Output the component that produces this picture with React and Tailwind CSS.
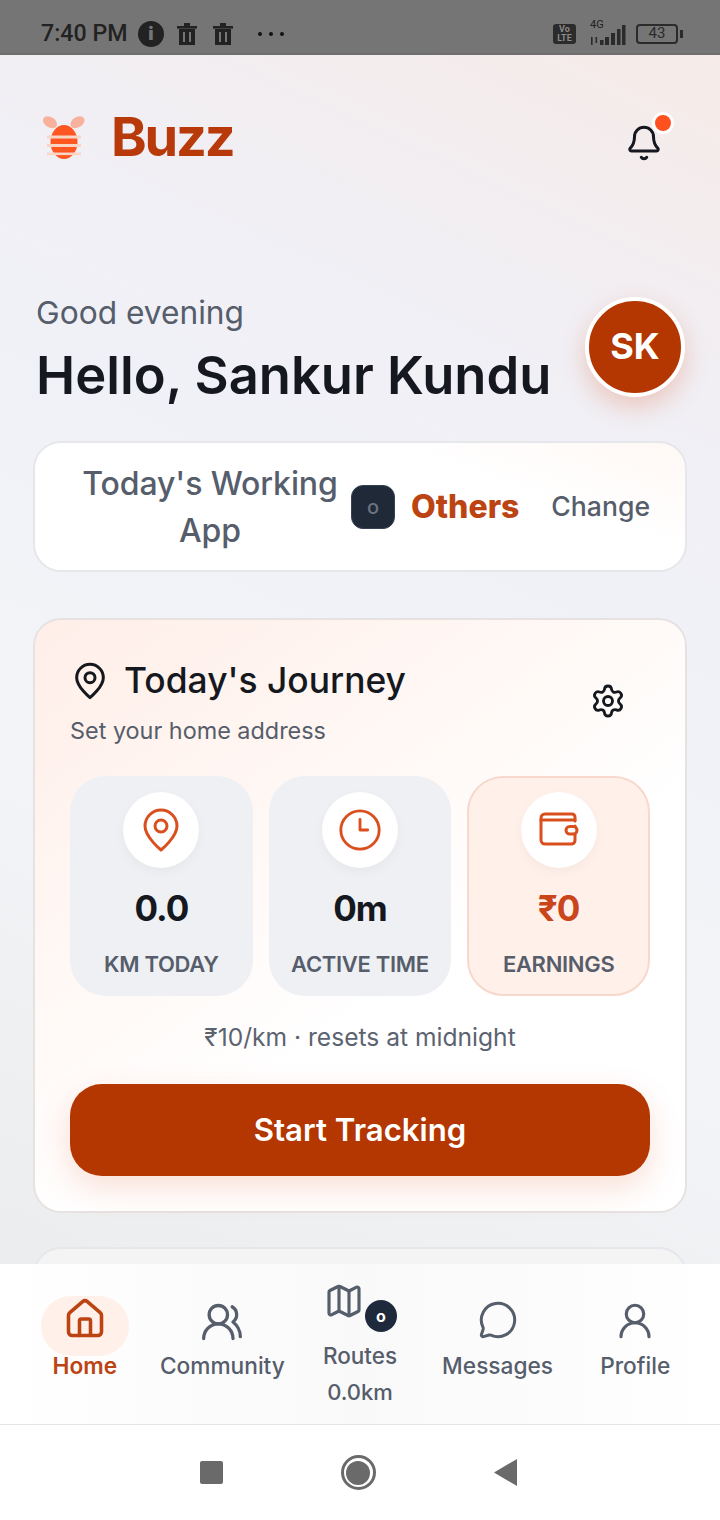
import { Bell, House, Map, MessageCircle, Settings, UserRound, UsersRound } from "lucide-react";

function BuzzLogo() {
  return (
    <svg width="46" height="46" viewBox="0 0 46 46">
      <ellipse cx="9" cy="8.2" rx="7.6" ry="5.2" transform="rotate(32 9 8.2)" fill="#f8b19c" />
      <ellipse cx="36.5" cy="8.2" rx="7.6" ry="5.2" transform="rotate(-32 36.5 8.2)" fill="#f8b19c" />
      <ellipse cx="23" cy="28" rx="13.5" ry="17" fill="#ff5722" />
      <rect x="6" y="21.5" width="34" height="3" fill="#fcd5c5" />
      <rect x="6" y="30" width="34" height="3" fill="#fcd5c5" />
      <rect x="6" y="38.5" width="34" height="2.6" fill="#fcd5c5" />
    </svg>
  );
}

function Trash() {
  return (
    <svg width="20" height="22" viewBox="0 0 20 22" fill="#222">
      <rect x="0" y="3" width="20" height="2.6" />
      <rect x="7" y="0" width="6" height="3" />
      <path d="M2 6h16v16H2z M6 9v10h2V9z M12 9v10h2V9z" fillRule="evenodd" />
    </svg>
  );
}

function StatusBar() {
  return (
    <div className="h-[55px] shrink-0 bg-[#757575] border-b-2 border-[#6e6e6e] flex items-center pl-[41px] pr-[37px] pt-[14px] text-[#222]">
      <span className="text-[23.2px] font-medium font-['Roboto',sans-serif] leading-none w-[97px]">7:40 PM</span>
      <div className="w-[26px] h-[26px] rounded-full bg-[#222] flex items-center justify-center">
        <span className="text-[#757575] text-[18px] font-black font-['Inter',sans-serif] leading-none">i</span>
      </div>
      <div className="ml-[13px]"><Trash /></div>
      <div className="ml-[16px]"><Trash /></div>
      <div className="ml-[25px] flex gap-[7px]">
        <span className="w-[4px] h-[4px] rounded-full bg-[#111]" />
        <span className="w-[4px] h-[4px] rounded-full bg-[#111]" />
        <span className="w-[4px] h-[4px] rounded-full bg-[#111]" />
      </div>
      <div className="ml-auto flex items-center">
        <div className="w-[23px] h-[20px] rounded-[3px] bg-[#2b2b2b] text-[#8a8a8a] text-[9px] font-bold leading-[9px] text-center font-['Roboto',sans-serif] pt-[1px]">
          Vo<br />LTE
        </div>
        <div className="ml-[12px] relative w-[38px] h-[22px]">
          <span className="absolute left-[2px] -top-[4px] text-[11px] leading-none text-[#222] font-['Roboto',sans-serif]">4G</span>
          <svg className="absolute left-0 bottom-0" width="38" height="20" viewBox="0 0 38 20" fill="#2b2b2b">
            <path d="M3 12v8h1.6v-8zM7.5 12v6h1.6v-6z" />
            <rect x="12" y="15" width="3.5" height="5" />
            <rect x="17" y="12" width="4" height="8" />
            <rect x="23" y="8" width="4" height="12" />
            <rect x="29" y="4" width="3.5" height="16" />
            <rect x="34" y="0" width="3.5" height="20" />
          </svg>
        </div>
        <div className="ml-[10px] w-[42px] h-[20px] rounded-[4px] border-2 border-[#2b2b2b] flex items-center justify-center text-[15px] leading-none text-[#2b2b2b] font-['Roboto',sans-serif]">
          43
        </div>
        <div className="ml-[2px] w-[3px] h-[8px] bg-[#2b2b2b]" />
      </div>
    </div>
  );
}

function PinIcon({ size, strokeWidth, className }) {
  return (
    <svg width={size} height={size} viewBox="0 0 24 24" fill="none" stroke="currentColor" strokeWidth={strokeWidth} strokeLinejoin="round" className={className}>
      <path d="M20 10c0 5.5-8 12-8 12s-8-6.5-8-12a8 8 0 0 1 16 0z" />
      <circle cx="12" cy="10" r="3" />
    </svg>
  );
}

function ClockIcon() {
  return (
    <svg width="46" height="46" viewBox="0 0 24 24" fill="none" stroke="#d9501e" strokeWidth="1.5" strokeLinecap="round" strokeLinejoin="round">
      <circle cx="12" cy="12" r="10" />
      <path d="M12 6.5V12h4" />
    </svg>
  );
}

function WalletIcon() {
  return (
    <svg width="40" height="38" viewBox="0 0 40 38" fill="none" stroke="#d9501e" strokeWidth="3" strokeLinejoin="round" strokeLinecap="round">
      <path d="M36 15V29a4 4 0 0 1-3 4H6a4 4 0 0 1-4-4V7a4 4 0 0 1 4-4h27a3 3 0 0 1 3 3v4" />
      <path d="M2 9h34" />
      <rect x="27" y="15.5" width="11" height="7.5" rx="3.7" fill="#fff" />
    </svg>
  );
}

function StatCard({ icon, value, label, highlight }) {
  return (
    <div
      className={
        highlight
          ? "h-[220px] rounded-[36px] bg-[#fff0ea] border-2 border-[#f8d8cc] flex flex-col items-center pt-[14px]"
          : "h-[220px] rounded-[36px] bg-[#eef0f4] flex flex-col items-center pt-[16px]"
      }
    >
      <div className="w-[76px] h-[76px] rounded-full bg-white shadow-[0_4px_12px_rgba(0,0,0,0.04)] flex items-center justify-center">
        {icon}
      </div>
      <div className={highlight ? "mt-[20px] text-[35px] leading-[40px] font-bold tracking-[-1px] text-[#c9451a]" : "mt-[20px] text-[35px] leading-[40px] font-bold tracking-[-1px] text-[#16181f]"}>
        {value}
      </div>
      <div className="mt-[22px] text-[22px] leading-[28px] font-semibold text-[#565d6b] tracking-[-0.3px]">{label}</div>
    </div>
  );
}

function NavItem({ icon, label, active }) {
  return (
    <div className="flex flex-col items-center pt-[32px]">
      <div className={active ? "w-[88px] h-[60px] -mb-[8px] rounded-full bg-[#fff0ea] flex items-start justify-center pt-[1px]" : "h-[60px] -mb-[8px] flex items-start justify-center pt-[4px]"}>
        {icon}
      </div>
      <span className={active ? "text-[22.7px] leading-[36px] font-semibold text-[#bc4412]" : "text-[22.7px] leading-[36px] font-medium text-[#565d6b]"}>
        {label}
      </span>
    </div>
  );
}

function BottomNav() {
  return (
    <div className="h-[161px] shrink-0 bg-gradient-to-r from-white via-[#f9f9fa] to-white border-b border-[#e4e5e7] grid grid-cols-5 px-4 font-['Inter',sans-serif]">
      <NavItem active label="Home" icon={<House size={44} strokeWidth={1.95} className="text-[#bc4412]" />} />
      <NavItem label="Community" icon={<UsersRound size={44} strokeWidth={1.8} className="text-[#565d6b]" />} />
      <div className="flex flex-col items-center pt-[17px]">
        <div className="relative -translate-x-[16px]">
          <Map size={40} strokeWidth={1.9} className="text-[#565d6b]" />
          <div className="absolute -right-[33px] top-[19px] w-[32px] h-[32px] rounded-full bg-[#1e293b] flex items-center justify-center text-white text-[16px] font-bold leading-none">
            o
          </div>
        </div>
        <span className="mt-[20px] text-[22.5px] leading-[30px] font-medium text-[#565d6b]">Routes</span>
        <span className="mt-[7px] text-[22px] leading-[28px] font-medium text-[#565d6b]">0.0km</span>
      </div>
      <NavItem label="Messages" icon={<MessageCircle size={40} strokeWidth={1.8} className="text-[#565d6b]" />} />
      <NavItem label="Profile" icon={<UserRound size={42} strokeWidth={1.8} className="text-[#565d6b]" />} />
    </div>
  );
}

function SystemNav() {
  return (
    <div className="flex-1 bg-white flex items-center justify-center gap-[118px] pr-[4px]">
      <div className="w-[23px] h-[23px] rounded-[2px] bg-[#6a6a6a]" />
      <div className="w-[35px] h-[35px] rounded-full border-[3px] border-[#6a6a6a] flex items-center justify-center">
        <div className="w-[24px] h-[24px] rounded-full bg-[#6a6a6a]" />
      </div>
      <svg width="23" height="27" viewBox="0 0 23 27"><path d="M0 13.5 23 0v27z" fill="#6a6a6a" /></svg>
    </div>
  );
}

export default function App() {
  return (
    <div className="w-[720px] h-[1520px] flex flex-col overflow-hidden font-['Inter',sans-serif]">
      <StatusBar />

      <div className="h-[1209px] shrink-0 overflow-hidden bg-[linear-gradient(205deg,#f6ebe8_0%,#f1eff4_22%,#f0f1f7_38%,#f3f4f7_65%,#ecedee_100%)]">
        <div className="flex items-center justify-between pt-[54px] pl-[41px] pr-[57px]">
          <div className="flex items-center gap-[24px]">
            <BuzzLogo />
            <span className="text-[54px] leading-[56px] font-bold text-[#b83a0a] tracking-[-2.2px]">Buzz</span>
          </div>
          <div className="relative mt-[12px]">
            <Bell size={38} strokeWidth={1.9} className="text-[#15181e]" />
            <span className="absolute -right-[11px] -top-[12px] w-[22px] h-[22px] rounded-full bg-[#ff5020] border-[3px] border-white" />
          </div>
        </div>

        <div className="mt-[130px] pl-[36px] pr-[36px] flex items-start justify-between">
          <div>
            <div className="text-[31.7px] leading-[36px] text-[#565d6b]">Good evening</div>
            <div className="mt-[13px] text-[52.5px] leading-[62px] font-semibold text-[#15181e]">Hello, Sankur Kundu</div>
          </div>
          <div className="mt-[2px] w-[100px] h-[100px] -mr-[1px] rounded-full bg-[#b43600] border-4 border-white shadow-[0_10px_24px_rgba(220,80,30,0.25)] flex items-center justify-center text-white text-[36px] font-bold pb-[3px]">
            SK
          </div>
        </div>

        <div className="mt-[35px] mx-[33px] h-[131px] rounded-[28px] bg-[linear-gradient(200deg,#fff8f5_0%,#ffffff_30%)] border-2 border-[#e6e7ea] flex items-center pl-[35px] pr-[35px]">
          <div className="w-[280px] text-center text-[32px] leading-[47px] font-[550] tracking-[-0.1px] text-[#565d6b] mr-[1px]">Today's Working App</div>
          <div className="w-[44px] h-[44px] rounded-[12px] bg-[#1f2937] border border-[#374151] flex items-center justify-center text-[#6b7280] text-[20px] font-medium">
            o
          </div>
          <span className="ml-[16px] text-[32px] font-extrabold text-[#bc4412]">Others</span>
          <span className="ml-auto text-[26.6px] font-medium text-[#565d6b]">Change</span>
        </div>

        <div className="mt-[46px] mx-[33px] h-[595px] rounded-[28px] border-2 border-[#e6e2e1] bg-[linear-gradient(145deg,#ffeee8_0%,#fff5f1_25%,#ffffff_60%)] px-[35px] pt-[38px]">
          <div className="flex justify-between">
            <div>
              <div className="flex items-center">
                <PinIcon size={40} strokeWidth={1.8} className="text-[#15181e]" />
                <span className="ml-[14px] text-[35.4px] leading-[46px] font-medium text-[#15181e]">Today's Journey</span>
              </div>
              <div className="mt-[11px] text-[23.4px] leading-[32px] text-[#565d6b]">Set your home address</div>
            </div>
            <Settings size={36} strokeWidth={1.9} className="text-[#15181e] mt-[25px] mr-[24px]" />
          </div>

          <div className="mt-[29px] grid grid-cols-3 gap-[16px]">
            <StatCard icon={<PinIcon size={48} strokeWidth={1.5} className="text-[#d9501e]" />} value="0.0" label="KM TODAY" />
            <StatCard icon={<ClockIcon />} value="0m" label="ACTIVE TIME" />
            <StatCard highlight icon={<WalletIcon />} value="₹0" label="EARNINGS" />
          </div>

          <div className="mt-[24px] text-center text-[24.6px] leading-[34px] text-[#5c6370]">₹10/km · resets at midnight</div>

          <button className="mt-[30px] w-full h-[92px] rounded-[32px] bg-[#b43600] text-white text-[31.2px] font-semibold shadow-[0_12px_32px_rgba(220,80,30,0.18)]">
            Start Tracking
          </button>
        </div>

        <div className="mt-[34px] mx-[33px] h-[60px] rounded-t-[28px] bg-[#f4f4f5] border-2 border-[#e6e7ea]" />
      </div>

      <BottomNav />
      <SystemNav />
    </div>
  );
}
